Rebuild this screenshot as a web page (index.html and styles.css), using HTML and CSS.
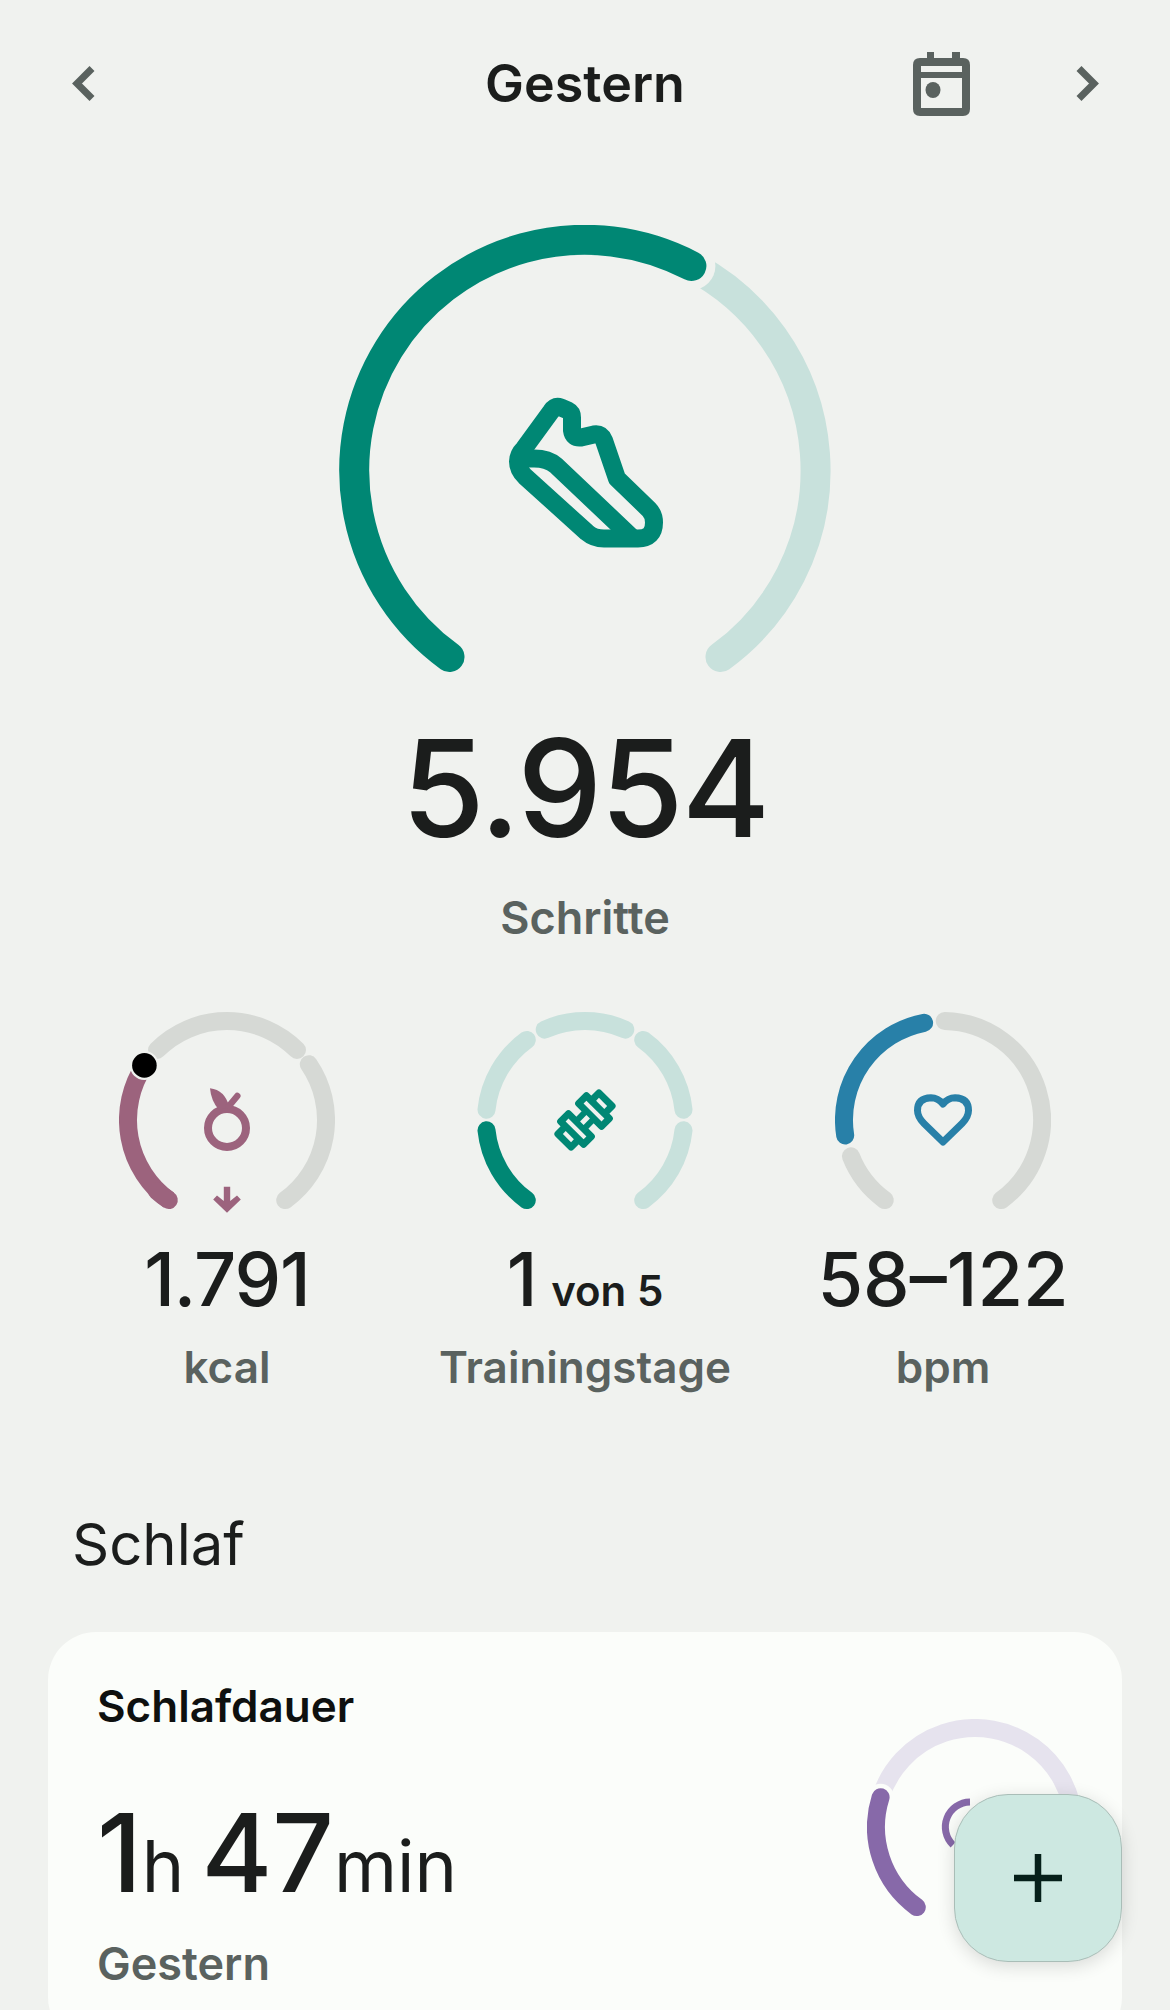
FILE: index.html
```html
<!DOCTYPE html>
<html lang="de">
<head>
    <meta charset="UTF-8">
    <meta name="viewport" content="width=device-width, initial-scale=1.0">
    <title>Gestern</title>
    <link rel="stylesheet" href="styles.css">
</head>
<body>
    <header class="topbar">
        <div class="topbar-left">
            <span class="nav-btn">
                <svg width="72" height="72" viewBox="0 0 72 72"><path class="icon-line" d="M44 20.5 L29 35.5 L44 50.5"/></svg>
            </span>
        </div>
        <div class="title">Gestern</div>
        <div class="topbar-right">
            <span class="nav-btn">
                <svg width="72" height="72" viewBox="0 0 72 72">
                    <path class="icon-fill" fill-rule="evenodd" d="M14 10 H21 V4 H28 V10 H46 V4 H54 V10 H57 Q64 10 64 17 V61 Q64 68 57 68 H14 Q7 68 7 61 V17 Q7 10 14 10 Z M15 18 V24 H56 V18 Z M15 30 V60 H56 V30 Z"/>
                    <ellipse class="icon-fill" cx="27" cy="42" rx="7.5" ry="8"/>
                </svg>
            </span>
            <span class="nav-btn">
                <svg width="72" height="72" viewBox="0 0 72 72"><path class="icon-line" d="M29 20.5 L44 35.5 L29 50.5"/></svg>
            </span>
        </div>
    </header>

    <section class="hero">
        <svg class="hero-gauge" width="492" height="450" viewBox="-246 -245.5 492 450">
            <path class="arc arc-big arc-teal-light" d="M106.4 -204.5 A230.5 230.5 0 0 1 135.5 186.5"/>
            <circle class="ring" cx="106.4" cy="-204.5" r="24"/>
            <path class="arc arc-big arc-teal" d="M-135.5 186.5 A230.5 230.5 0 0 1 106.4 -204.5"/>
            <g class="shoe" transform="translate(1 0)">
                <path d="M-62 -22 L-35 -59 Q-31 -65 -25 -63 L-18 -60 Q-14 -58 -14 -53 L-14 -40 Q-13 -32 -5 -33 L8 -36 Q15 -37 18 -30 L31 8 L63 39 Q68 44 68 52 Q68 68 52 68 L18 68 Q8 68 1 62 L-61 6 Q-68 -1 -68 -9 Q-68 -16 -62 -22 Z"/>
                <path d="M-66 -12 L-52 -12 Q-38 -12 -30 -5 L47 68"/>
            </g>
        </svg>
        <div class="hero-value">5.954</div>
        <div class="label hero-label">Schritte</div>
    </section>

    <section class="stats">
        <div class="stat">
            <svg class="stat-gauge" width="216" height="204" viewBox="-108 -108 216 204">
                <path class="arc arc-grey" d="M-70 -70 A99 99 0 0 1 70 -70"/>
                <path class="arc arc-grey" d="M81.8 -55.8 A99 99 0 0 1 58.2 80.1"/>
                <path class="arc-butt arc-mauve" d="M-58.2 80.1 A99 99 0 0 1 -82.6 -54.6"/>
                <path class="arc arc-mauve" d="M-58.2 80.1 A99 99 0 0 1 -70 71"/>
                <circle class="ring" cx="-82.6" cy="-54.6" r="14.5"/>
                <circle cx="-82.6" cy="-54.6" r="12.3" fill="#000"/>
                <circle cx="0" cy="8" r="19" fill="none" stroke="#9c637d" stroke-width="8"/>
                <path fill="#9c637d" d="M-17 -31.7 Q-2 -30 2.3 -13 L-8 -10 Q-16 -19 -17 -31.7 Z"/>
                <path d="M2 -14 L10.3 -24" fill="none" stroke="#9c637d" stroke-width="6.5" stroke-linecap="round"/>
                <path fill="#9c637d" d="M-3.2 66.7 H3.2 V81 L10 75.5 L13.8 79.5 L0 92.7 L-13.8 79.5 L-10 75.5 L-3.2 81 Z"/>
            </svg>
            <div class="stat-value stat-value-tight">1.791</div>
            <div class="label">kcal</div>
        </div>
        <div class="stat">
            <svg class="stat-gauge" width="216" height="204" viewBox="-108 -108 216 204">
                <path class="arc arc-teal" d="M-58.2 80.1 A99 99 0 0 1 -98.5 10.3"/>
                <path class="arc arc-teal-light" d="M-98.5 -10.3 A99 99 0 0 1 -58.2 -80.1"/>
                <path class="arc arc-teal-light" d="M-40.3 -90.4 A99 99 0 0 1 40.3 -90.4"/>
                <path class="arc arc-teal-light" d="M58.2 -80.1 A99 99 0 0 1 98.5 -10.3"/>
                <path class="arc arc-teal-light" d="M98.5 10.3 A99 99 0 0 1 58.2 80.1"/>
                <g transform="rotate(-45)">
                    <rect class="plate" x="-8" y="-5" width="16" height="10"/>
                    <rect class="plate" x="7.2" y="-16.2" width="11" height="32.4"/>
                    <rect class="plate" x="-18.2" y="-16.2" width="11" height="32.4"/>
                    <rect class="plate" x="18" y="-9.3" width="11" height="18.6"/>
                    <rect class="plate" x="-29" y="-9.3" width="11" height="18.6"/>
                    <rect class="slot" x="-4.5" y="-2.5" width="9" height="5"/>
                    <rect class="slot" x="10.7" y="-12.7" width="4" height="25.4"/>
                    <rect class="slot" x="-14.7" y="-12.7" width="4" height="25.4"/>
                    <rect class="slot" x="21.5" y="-5.8" width="4" height="11.6"/>
                    <rect class="slot" x="-25.5" y="-5.8" width="4" height="11.6"/>
                </g>
            </svg>
            <div class="stat-value">1 <span class="stat-unit">von 5</span></div>
            <div class="label">Trainingstage</div>
        </div>
        <div class="stat">
            <svg class="stat-gauge" width="216" height="204" viewBox="-108 -108 216 204">
                <path class="arc arc-grey" d="M1.7 -99 A99 99 0 0 1 58.2 80.1"/>
                <path class="arc arc-grey" d="M-58.2 80.1 A99 99 0 0 1 -92.1 36.3"/>
                <path class="arc arc-blue" d="M-97.8 15.5 A99 99 0 0 1 -18.9 -97.2"/>
                <path class="heart" d="M0 22 L-19 3.5 Q-25.5 -3 -25.5 -9.5 Q-25.5 -22 -12 -22.3 Q-5 -22.3 0 -16 Q5 -22.3 12 -22.3 Q25.5 -22 25.5 -9.5 Q25.5 -3 19 3.5 Z"/>
            </svg>
            <div class="stat-value">58–122</div>
            <div class="label">bpm</div>
        </div>
    </section>

    <h2 class="section-title">Schlaf</h2>

    <section class="card">
        <div class="card-text">
            <div class="card-title">Schlafdauer</div>
            <div class="card-value"><span>1</span><span class="card-unit">h</span><span class="card-minutes">47</span><span class="card-unit">min</span></div>
            <div class="label card-label">Gestern</div>
        </div>
        <svg class="card-gauge" width="216" height="204" viewBox="-108 -108 216 204">
            <path class="arc arc-purple-light" d="M-94.4 -29.8 A99 99 0 1 1 58.2 80.1"/>
            <circle cx="-94.4" cy="-29.8" r="13.5" fill="#fbfdfa"/>
            <path class="arc arc-purple" d="M-58.2 80.1 A99 99 0 0 1 -94.4 -29.8"/>
            <path d="M-5 -25 A25 25 0 0 0 -22 18" fill="none" stroke="#8769a9" stroke-width="7"/>
        </svg>
    </section>

    <button class="fab" type="button">
        <svg width="48" height="48" viewBox="0 0 48 48"><path d="M24 0 V48 M0 24 H48" stroke="#06201a" stroke-width="6.5" fill="none"/></svg>
    </button>
</body>
</html>
```

FILE: styles.css
```css
html, body {
    margin: 0;
    padding: 0;
    height: 2010px;
    overflow: hidden;
    background-color: #f0f2ef;
    font-family: Inter, "Liberation Sans", sans-serif;
    color: #1b1d1c;
}

svg {
    display: block;
}

/* top bar */
.topbar {
    display: grid;
    grid-template-columns: 1fr auto 1fr;
    align-items: center;
    height: 168px;
    padding: 0 48px;
}

.topbar-right {
    display: flex;
    justify-content: flex-end;
    gap: 72px;
}

.nav-btn {
    display: block;
    width: 72px;
    height: 72px;
}

.title {
    font-size: 52px;
    font-weight: 600;
    line-height: 60px;
}

.icon-line {
    fill: none;
    stroke: #5a625f;
    stroke-width: 7;
}

.icon-fill {
    fill: #5a625f;
}

/* gauges */
.arc, .arc-butt {
    fill: none;
    stroke-width: 18;
}

.arc {
    stroke-linecap: round;
}

.arc-big {
    stroke-width: 30;
}

.arc-teal { stroke: #008774; }
.arc-teal-light { stroke: #c8e1dc; }
.arc-grey { stroke: #d6d9d5; }
.arc-mauve { stroke: #9c637d; }
.arc-blue { stroke: #2880a8; }
.arc-purple { stroke: #8769a9; }
.arc-purple-light { stroke: #e6e3ee; }

.ring {
    fill: #f0f2ef;
}

.shoe path {
    fill: none;
    stroke: #008774;
    stroke-width: 18;
    stroke-linejoin: round;
}

.plate {
    fill: #008774;
    stroke: #008774;
    stroke-width: 7;
    stroke-linejoin: round;
}

.slot {
    fill: #f0f2ef;
}

.heart {
    fill: none;
    stroke: #2880a8;
    stroke-width: 7;
    stroke-linejoin: round;
}

/* hero */
.hero {
    display: flex;
    flex-direction: column;
    align-items: center;
    margin-top: 57px;
}

.hero-value {
    margin-top: 38px;
    font-size: 135px;
    font-weight: 500;
    line-height: 150px;
    letter-spacing: -2px;
}

.label {
    font-size: 44px;
    font-weight: 600;
    line-height: 56px;
    color: #5a625f;
}

.hero-label {
    margin-top: 27px;
    font-size: 45px;
}

/* stats */
.stats {
    display: grid;
    grid-template-columns: repeat(3, 1fr);
    margin-top: 66px;
    padding: 0 48px;
}

.stat {
    display: flex;
    flex-direction: column;
    align-items: center;
}

.stat-value {
    margin-top: 21px;
    margin-bottom: 18px;
    font-size: 74px;
    font-weight: 500;
    line-height: 84px;
}

.stat-value-tight {
    letter-spacing: -1px;
}

.stat-unit {
    margin-left: -6px;
    font-size: 42px;
    font-weight: 600;
    line-height: 1;
}

/* sleep */
.section-title {
    margin: 114px 0 0 72px;
    font-size: 58px;
    font-weight: 400;
    line-height: 70px;
}

.card {
    display: flex;
    justify-content: space-between;
    box-sizing: border-box;
    height: 413px;
    margin: 53px 48px 0;
    padding: 46px 39px 0 49px;
    background-color: #fbfdfa;
    border-radius: 48px;
}

.card-title {
    font-size: 44px;
    font-weight: 600;
    line-height: 56px;
    color: #0e100f;
}

.card-value {
    margin-top: 59px;
    margin-bottom: 23px;
    font-size: 108px;
    font-weight: 500;
    line-height: 120px;
}

.card-minutes {
    margin-left: 17px;
}

.card-unit {
    font-size: 72px;
    font-weight: 400;
    line-height: 1;
}

.card-label {
    font-size: 45px;
}

.card-gauge {
    margin-top: 41px;
}

.fab {
    position: fixed;
    right: 48px;
    bottom: 48px;
    display: flex;
    align-items: center;
    justify-content: center;
    width: 168px;
    height: 168px;
    padding: 0;
    background-color: #cde8e1;
    border: 1px solid #a9bdb7;
    border-radius: 54px;
    box-shadow: 0 4px 18px rgba(0, 0, 0, 0.14);
}
```
